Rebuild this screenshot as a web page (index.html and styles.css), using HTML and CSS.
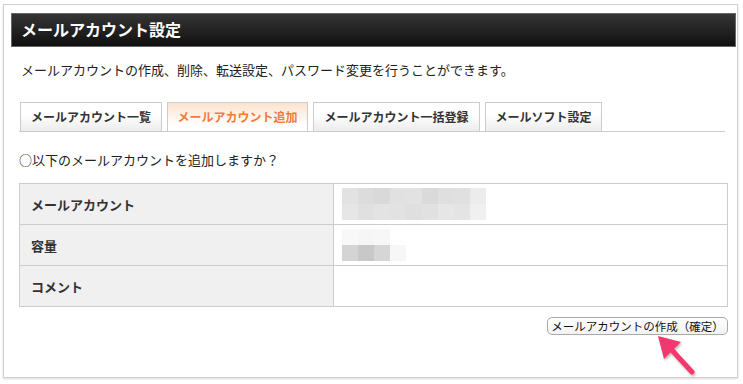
FILE: index.html
```html
<!DOCTYPE html>
<html lang="ja">
  <head>
    <meta charset="UTF-8" />
    <title>メールアカウント設定</title>
    <link rel="stylesheet" href="styles.css">
  </head>
  <body>
    <div class="frame">
      <h1 class="title">メールアカウント設定</h1>

      <div class="content">
        <p class="desc">メールアカウントの作成、削除、転送設定、パスワード変更を行うことができます。</p>

        <ul class="tabs">
          <li class="tab">メールアカウント一覧</li>
          <li class="tab active">メールアカウント追加</li>
          <li class="tab">メールアカウント一括登録</li>
          <li class="tab">メールソフト設定</li>
        </ul>

        <p class="question">○以下のメールアカウントを追加しますか？</p>

        <table class="confirm">
          <tr>
            <th>メールアカウント</th>
            <td>
              <div class="blur">
                <div class="px-row">
                  <span style="background:#e2e2e2"></span><span style="background:#dcdcdc"></span><span style="background:#d9d9d9"></span><span style="background:#e1e1e1"></span><span style="background:#e2e2e2"></span><span style="background:#dadada"></span><span style="background:#dfdfdf"></span><span style="background:#e0e0e0"></span><span style="background:#ececec"></span>
                </div>
                <div class="px-row">
                  <span style="background:#e6e6e6"></span><span style="background:#e0e0e0"></span><span style="background:#e3e3e3"></span><span style="background:#e2e2e2"></span><span style="background:#dfdfdf"></span><span style="background:#e1e1e1"></span><span style="background:#e6e6e6"></span><span style="background:#e4e4e4"></span><span style="background:#f0f0f0"></span>
                </div>
              </div>
            </td>
          </tr>
          <tr>
            <th>容量</th>
            <td>
              <div class="blur">
                <div class="px-row">
                  <span style="background:#f8f8f8"></span><span style="background:#f6f6f6"></span><span style="background:#f7f7f7"></span>
                </div>
                <div class="px-row">
                  <span style="background:#d4d4d4"></span><span style="background:#c8c8c8"></span><span style="background:#d6d6d6"></span><span style="background:#f7f7f7"></span>
                </div>
              </div>
            </td>
          </tr>
          <tr>
            <th>コメント</th>
            <td></td>
          </tr>
        </table>

        <div class="actions">
          <button class="submit">メールアカウントの作成（確定）</button>
        </div>
      </div>

      <!-- annotation arrow -->
      <svg class="arrow" width="44" height="44" viewBox="0 0 44 44">
        <line x1="37" y1="39" x2="14" y2="14" stroke="#f2386e" stroke-width="5" stroke-linecap="round" />
        <polygon points="3,3 26,9 9,26" fill="#f2386e" />
      </svg>
    </div>
  </body>
</html>
```

FILE: styles.css
```css
body {
  margin: 0;
  background: #fff;
  font-family: "Noto Sans CJK JP", "Noto Sans", sans-serif;
  color: #222;
}

.frame {
  position: relative;
  margin: 4px 5px 4px 3px;
  height: 374px;
  border: 1px solid #d0d0d0;
  box-shadow: 0 1px 2px rgba(0, 0, 0, 0.15);
  padding: 8px 1px 0 7px;
  box-sizing: border-box;
}

.title {
  margin: 0;
  height: 34px;
  box-sizing: border-box;
  border: 1px solid #666;
  background: linear-gradient(#353535, #101010);
  color: #fff;
  font-size: 16px;
  font-weight: bold;
  line-height: 31px;
  padding-left: 9px;
}

.content {
  padding: 0 8px 0 8px;
}

.desc {
  margin: 14px 0 0 2px;
  font-size: 13px;
  line-height: 18px;
  color: #222;
}

.tabs {
  list-style: none;
  margin: 23px 3px 0 0;
  padding: 0 0 0 1px;
  display: flex;
  gap: 5px;
  border-bottom: 1px solid #ccc;
}

.tab {
  height: 29px;
  box-sizing: border-box;
  border: 1px solid #ccc;
  border-bottom: none;
  background: linear-gradient(#fff 40%, #ececec);
  font-size: 12px;
  font-weight: bold;
  color: #333;
  line-height: 28px;
  text-align: center;
  white-space: nowrap;
}

.tab:nth-child(1) { width: 142px; }
.tab:nth-child(2) { width: 141px; }
.tab:nth-child(3) { width: 167px; }
.tab:nth-child(4) { width: 117px; }

.tab.active {
  background: linear-gradient(#fde3cf, #fff 80%);
  color: #f57a3a;
}

.question {
  margin: 19px 0 0 0;
  font-size: 13px;
  line-height: 18px;
  color: #222;
}

.confirm {
  margin-top: 14px;
  width: 709px;
  border-collapse: collapse;
}

.confirm th,
.confirm td {
  border: 1px solid #ccc;
  height: 40px;
  padding: 0;
}

.confirm th {
  width: 302px;
  background: #f0f0f0;
  text-align: left;
  font-size: 13px;
  font-weight: bold;
  color: #333;
  padding-left: 11px;
}

.confirm td {
  background: #fff;
  padding-left: 8px;
}

.blur {
  display: flex;
  flex-direction: column;
}

.px-row {
  display: flex;
}

.px-row span {
  display: block;
  width: 16px;
  height: 16px;
}

.actions {
  display: flex;
  justify-content: flex-end;
  margin-top: 10px;
  width: 709px;
}

.submit {
  height: 18px;
  width: 181px;
  padding: 0;
  border: 1px solid #aaa;
  border-radius: 5px;
  background: linear-gradient(#fff, #f2f2f2);
  font-family: inherit;
  font-size: 11.5px;
  line-height: 15px;
  color: #111;
}

.arrow {
  position: absolute;
  left: 651px;
  top: 328px;
  filter: drop-shadow(1px 2px 1px rgba(0, 0, 0, 0.25));
}
```
